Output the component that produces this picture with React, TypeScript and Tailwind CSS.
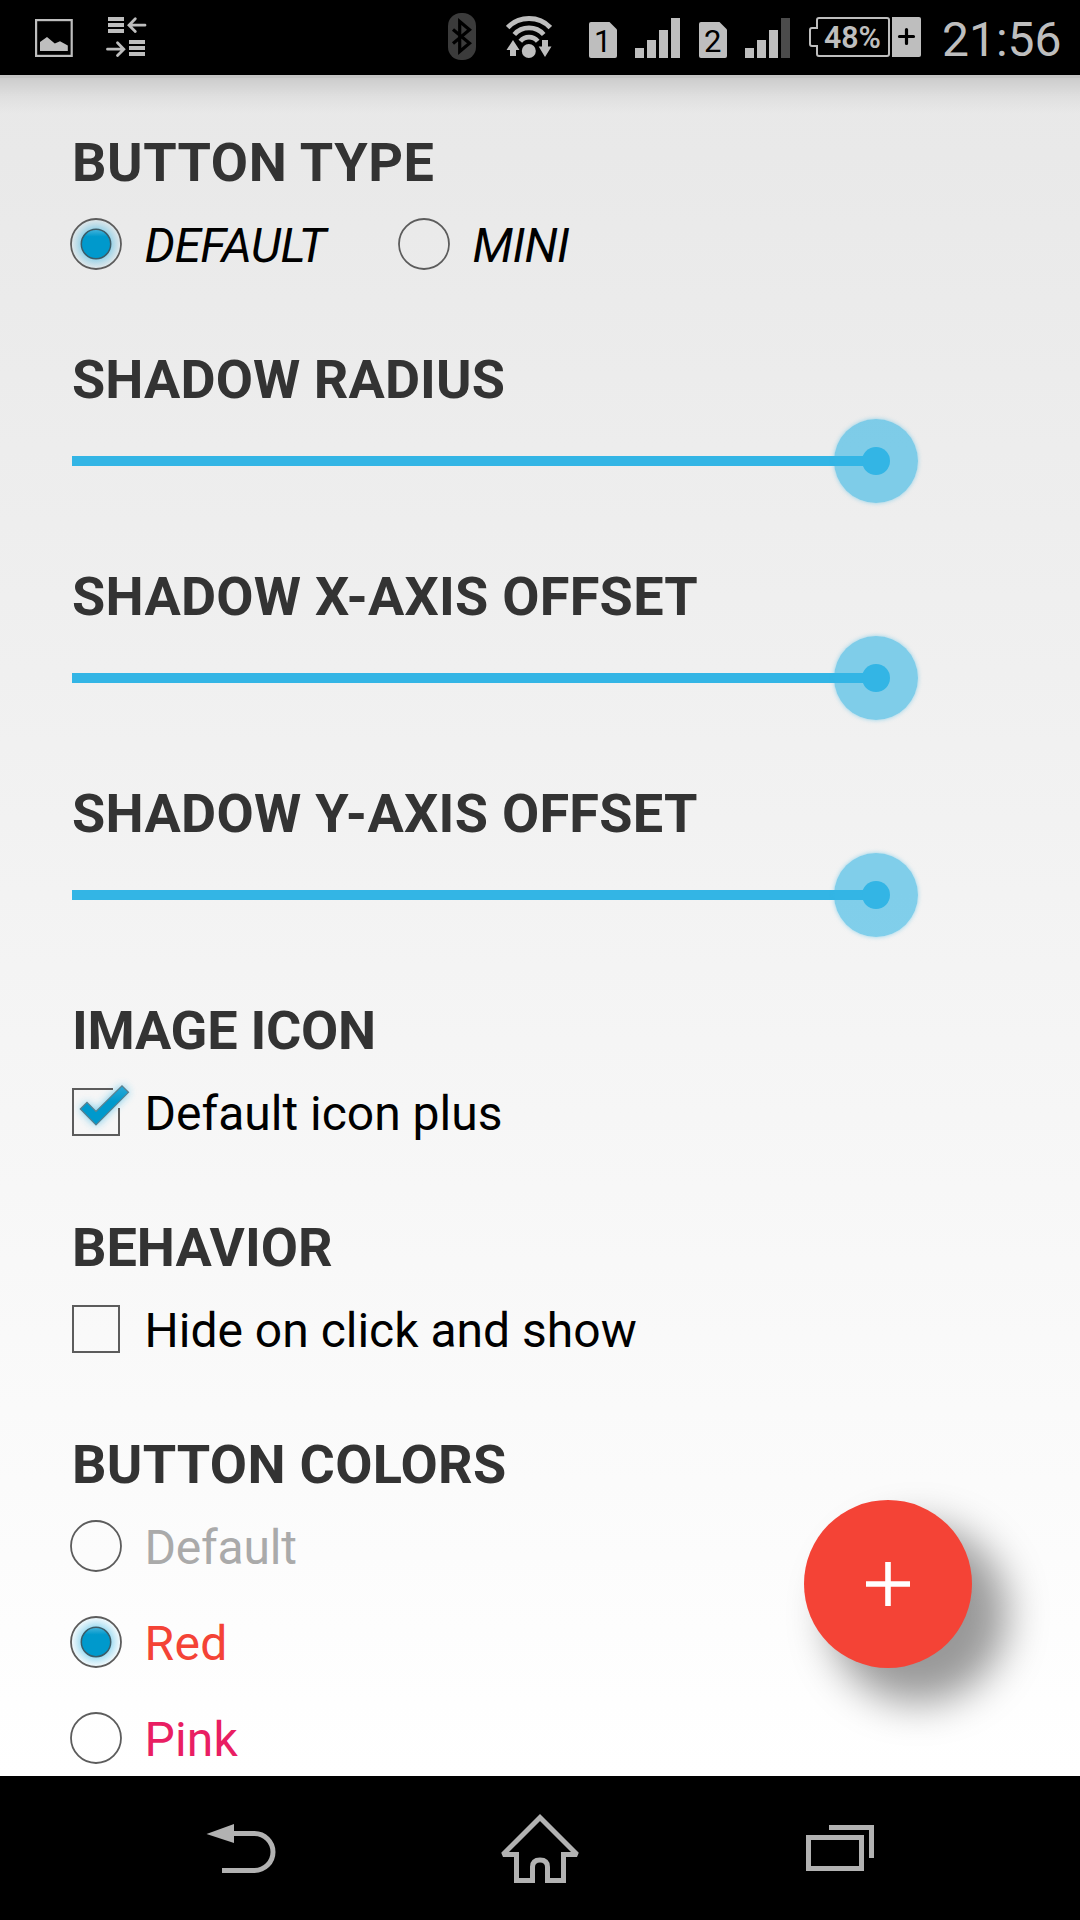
import React from "react";

const ICON = "#bebebe";
const NAV = "#b2b2b2";

function PictureIcon() {
  return (
    <svg className="ml-[34px]" width="40" height="75" viewBox="34 0 40 75" fill={ICON}>
      <rect x="36.1" y="20.1" width="35.6" height="35.8" fill="none" stroke={ICON} strokeWidth="2.2" />
      <path d="M40 51V42L47 37L54.8 43.6L60 41.2L67.8 45.5V51Z" />
    </svg>
  );
}

function TransferIcon() {
  return (
    <svg className="ml-[32px]" width="42" height="75" viewBox="106 0 42 75" fill={ICON}>
      <path d="M108 17h16v4h-16zM108 23h16v4h-16zM108 29h16v4h-16zM129 40h16v4h-16zM129 46h16v4h-16zM129 52h16v4h-16z" />
      <path
        d="M145 25.2H129.5M135.3 18.8L129 25.2L135.3 31.6M107.5 49.2H123.5M117.5 42.8L123.8 49.2L117.5 55.6"
        fill="none"
        stroke={ICON}
        strokeWidth="2.8"
        strokeLinecap="round"
      />
    </svg>
  );
}

function BluetoothIcon() {
  return (
    <svg className="ml-[300px]" width="28" height="75" viewBox="448 0 28 75">
      <rect x="448" y="13" width="28" height="47" rx="13" fill="#3b3b3b" />
      <path
        d="M453 29.5L469.5 43.3L459.7 51.5V21.5L469.5 29.7L453 43.5"
        fill="none"
        stroke="#000"
        strokeWidth="3.2"
      />
    </svg>
  );
}

function WifiIcon() {
  return (
    <svg className="ml-[30px]" width="46" height="75" viewBox="506 0 46 75" fill={ICON}>
      <g fill="none" stroke={ICON} strokeWidth="4.8">
        <path d="M507.7 27.5C519 15.5 539 15.5 550.3 27.5" />
        <path d="M514.3 34.5C522 25.8 536 25.8 543.7 34.5" />
        <path d="M520.3 41.3C525 35.8 533 35.8 537.7 41.3" />
      </g>
      <circle cx="528.8" cy="51" r="7" />
      <path d="M513 40L519.5 50H516V56H510V50H506.5ZM542 40H548V46.5H551.5L545 57L538.7 46.5H542Z" />
    </svg>
  );
}

function SimIcon({ digit, className }: { digit: string; className: string }) {
  return (
    <svg className={className} width="28" height="75" viewBox="0 0 28 75" fill={ICON}>
      <path d="M2 22H20.5L28 29.5V56Q28 58 26 58H2Q0 58 0 56V24Q0 22 2 22Z" />
      <text x="13.7" y="52" textAnchor="middle" fill="#000" fontFamily="Roboto, sans-serif" fontSize="31">
        {digit}
      </text>
    </svg>
  );
}

function SignalIcon({ last }: { last: string }) {
  return (
    <svg className="ml-[18px]" width="45" height="75" viewBox="0 0 45 75" fill={ICON}>
      <path d="M0 48h9v10H0zM12 40h9v18h-9zM24 30h9v28h-9z" />
      <path d="M36 18h9v40h-9z" fill={last} />
    </svg>
  );
}

function BatteryIcon() {
  return (
    <svg className="ml-[18px]" width="114" height="75" viewBox="808 0 114 75">
      <path
        d="M819 18H887Q889 18 889 20V54Q889 56 887 56H819Q817 56 817 54V46H812Q810 46 810 44V30Q810 28 812 28H817V20Q817 18 819 18Z"
        fill="none"
        stroke={ICON}
        strokeWidth="2"
      />
      <path d="M892 17H919Q921 17 921 19V55Q921 57 919 57H892Z" fill={ICON} />
      <path d="M899.5 36.5H913.5M906.5 29.5V43.5" stroke="#000" strokeWidth="3.2" strokeLinecap="round" />
      <text x="852.4" y="48" textAnchor="middle" fill={ICON} fontFamily="Roboto, sans-serif" fontWeight="600" fontSize="31" textLength="57" lengthAdjust="spacingAndGlyphs">
        48%
      </text>
    </svg>
  );
}

function StatusBar() {
  return (
    <header className="flex h-[75px] shrink-0 items-start bg-black">
      <PictureIcon />
      <TransferIcon />
      <BluetoothIcon />
      <WifiIcon />
      <SimIcon digit="1" className="ml-[37px]" />
      <SignalIcon last={ICON} />
      <SimIcon digit="2" className="ml-[19px]" />
      <SignalIcon last="#4b4b4b" />
      <BatteryIcon />
      <span className="ml-[20px] pt-[12px] text-[48px] leading-[56px] whitespace-nowrap text-[#bebebe]">21:56</span>
    </header>
  );
}

function Radio({ checked }: { checked?: boolean }) {
  return (
    <svg className="shrink-0" width="96" height="96" viewBox="0 0 96 96">
      <defs>
        <radialGradient id="radioGlow">
          <stop offset="0.55" stopColor="#33b5e5" stopOpacity="0.5" />
          <stop offset="0.78" stopColor="#33b5e5" stopOpacity="0.24" />
          <stop offset="1" stopColor="#33b5e5" stopOpacity="0.03" />
        </radialGradient>
        <linearGradient id="radioDot" x1="0" y1="0" x2="0" y2="1">
          <stop offset="0" stopColor="#46b4dc" />
          <stop offset="0.25" stopColor="#0099cc" />
          <stop offset="1" stopColor="#0099cc" />
        </linearGradient>
      </defs>
      {checked && <circle cx="48" cy="48" r="25" fill="url(#radioGlow)" />}
      <circle cx="48" cy="48" r="25" fill="none" stroke="#5c5c5c" strokeWidth="1.8" />
      {checked && <circle cx="48" cy="48" r="14.7" fill="url(#radioDot)" stroke="#3c5c68" strokeWidth="1.5" />}
    </svg>
  );
}

function CheckBox({ checked }: { checked?: boolean }) {
  return (
    <svg className="shrink-0" width="96" height="96" viewBox="0 0 96 96">
      {checked ? (
        <>
          <defs>
            <filter id="checkGlow" x="-40%" y="-40%" width="180%" height="180%">
              <feGaussianBlur stdDeviation="4.5" />
            </filter>
            <linearGradient id="checkFill" x1="0" y1="0" x2="0" y2="1">
              <stop offset="0" stopColor="#2ba9d8" />
              <stop offset="0.4" stopColor="#0099cc" />
              <stop offset="1" stopColor="#0099cc" />
            </linearGradient>
          </defs>
          <path d="M32 45L39 38L48 47L74 21L81 28L48 61.5Z" fill="#33b5e5" opacity="0.7" filter="url(#checkGlow)" />
          <path d="M65 25H25V71H71V44" fill="none" stroke="#5c5c5c" strokeWidth="2" />
          <path d="M32.3 45L39 38.4L48 47.4L74 21.8L80.5 28.3L48 61Z" fill="url(#checkFill)" stroke="#5b7f8d" strokeWidth="1.2" />
        </>
      ) : (
        <rect x="25" y="25" width="46" height="46" fill="none" stroke="#5c5c5c" strokeWidth="2" />
      )}
    </svg>
  );
}

function Slider() {
  return (
    <div className="relative ml-6 flex h-24 w-[804px] items-center">
      <div className="h-[10px] w-full bg-[#33b5e5]" />
      <div className="absolute -right-[42px] flex size-[84px] items-center justify-center rounded-full bg-[#33b5e5]/60 shadow-[0_0_4px_rgba(51,181,229,0.5)]">
        <div className="size-7 rounded-full bg-[#33b5e5]" />
      </div>
    </div>
  );
}

function Section({
  title,
  tracking = "",
  children,
}: {
  title: string;
  tracking?: string;
  children: React.ReactNode;
}) {
  return (
    <section className="h-[217px] shrink-0">
      <h2 className={`ml-6 h-[66px] text-[54px] leading-[66px] font-bold whitespace-nowrap text-[#333333] ${tracking}`}>
        {title}
      </h2>
      {children}
    </section>
  );
}

function Option({
  label,
  control,
  className = "",
}: {
  label: string;
  control: React.ReactNode;
  className?: string;
}) {
  return (
    <label className={`flex h-24 items-center text-[48px] leading-[56px] whitespace-nowrap ${className}`}>
      {control}
      <span className="pt-[3px] pl-[0.5px]">{label}</span>
    </label>
  );
}

function NavBar() {
  return (
    <nav className="flex h-36 shrink-0 items-start bg-black">
      <svg className="ml-[200px]" width="80" height="144" viewBox="200 1776 80 144">
        <path d="M206.5 1834L234 1824V1843Z" fill={NAV} />
        <path d="M233 1833.5H254.5A18.5 18.5 0 0 1 254.5 1870.5H222" fill="none" stroke={NAV} strokeWidth="5" />
      </svg>
      <svg className="ml-[216px]" width="88" height="144" viewBox="496 1776 88 144">
        <path
          d="M540 1817.6L577 1854.5H563.5V1880.5H547.5V1867Q547.5 1860 540 1860Q532.5 1860 532.5 1867V1880.5H516.5V1854.5H503Z"
          fill="none"
          stroke={NAV}
          strokeWidth="5"
          strokeMiterlimit="2"
        />
      </svg>
      <svg className="ml-[216px]" width="80" height="144" viewBox="800 1776 80 144" fill="none" stroke={NAV} strokeWidth="5">
        <rect x="808.5" y="1837.5" width="53" height="31" />
        <path d="M829 1827.5H871.5V1858" />
      </svg>
    </nav>
  );
}

export default function App() {
  return (
    <div className="relative flex h-[1920px] w-[1080px] flex-col overflow-hidden bg-black font-[Roboto,sans-serif] text-black">
      <StatusBar />
      <main className="relative flex h-[1701px] flex-col overflow-hidden bg-linear-to-b from-[#e8e8e8] to-white px-12 pt-[55px]">
        <div className="absolute inset-x-0 top-0 h-[3px] bg-[#c4c4c4]" />
        <div className="absolute inset-x-0 top-[3px] h-[36px] bg-linear-to-b from-black/12 via-black/4 to-transparent" />
        <Section title="BUTTON TYPE" tracking="tracking-[0.55px]">
          <div className="flex italic">
            <Option label="DEFAULT" control={<Radio checked />} className="w-[328px] tracking-[-0.6px]" />
            <Option label="MINI" control={<Radio />} className="tracking-[-0.7px]" />
          </div>
        </Section>
        <Section title="SHADOW RADIUS" tracking="tracking-[0.1px]">
          <Slider />
        </Section>
        <Section title="SHADOW X-AXIS OFFSET" tracking="tracking-[0.27px]">
          <Slider />
        </Section>
        <Section title="SHADOW Y-AXIS OFFSET" tracking="tracking-[0.3px]">
          <Slider />
        </Section>
        <Section title="IMAGE ICON" tracking="tracking-[-0.25px]">
          <Option label="Default icon plus" control={<CheckBox checked />} />
        </Section>
        <Section title="BEHAVIOR">
          <Option label="Hide on click and show" control={<CheckBox />} />
        </Section>
        <Section title="BUTTON COLORS" tracking="tracking-[0.3px]">
          <Option label="Default" control={<Radio />} className="tracking-[-0.2px] text-[#aaaaaa]" />
          <Option label="Red" control={<Radio checked />} className="tracking-[0.3px] text-[#f44336]" />
          <Option label="Pink" control={<Radio />} className="tracking-[0.2px] text-[#e91e63]" />
        </Section>
        <button className="absolute right-[108px] bottom-[108px] flex size-[168px] items-center justify-center rounded-full bg-[#f44336] shadow-[30px_30px_40px_5px_rgba(0,0,0,0.4)]">
          <svg width="44" height="44" viewBox="0 0 44 44">
            <path d="M22 0V44M0 22H44" stroke="#fff" strokeWidth="5.6" />
          </svg>
        </button>
      </main>
      <NavBar />
    </div>
  );
}
